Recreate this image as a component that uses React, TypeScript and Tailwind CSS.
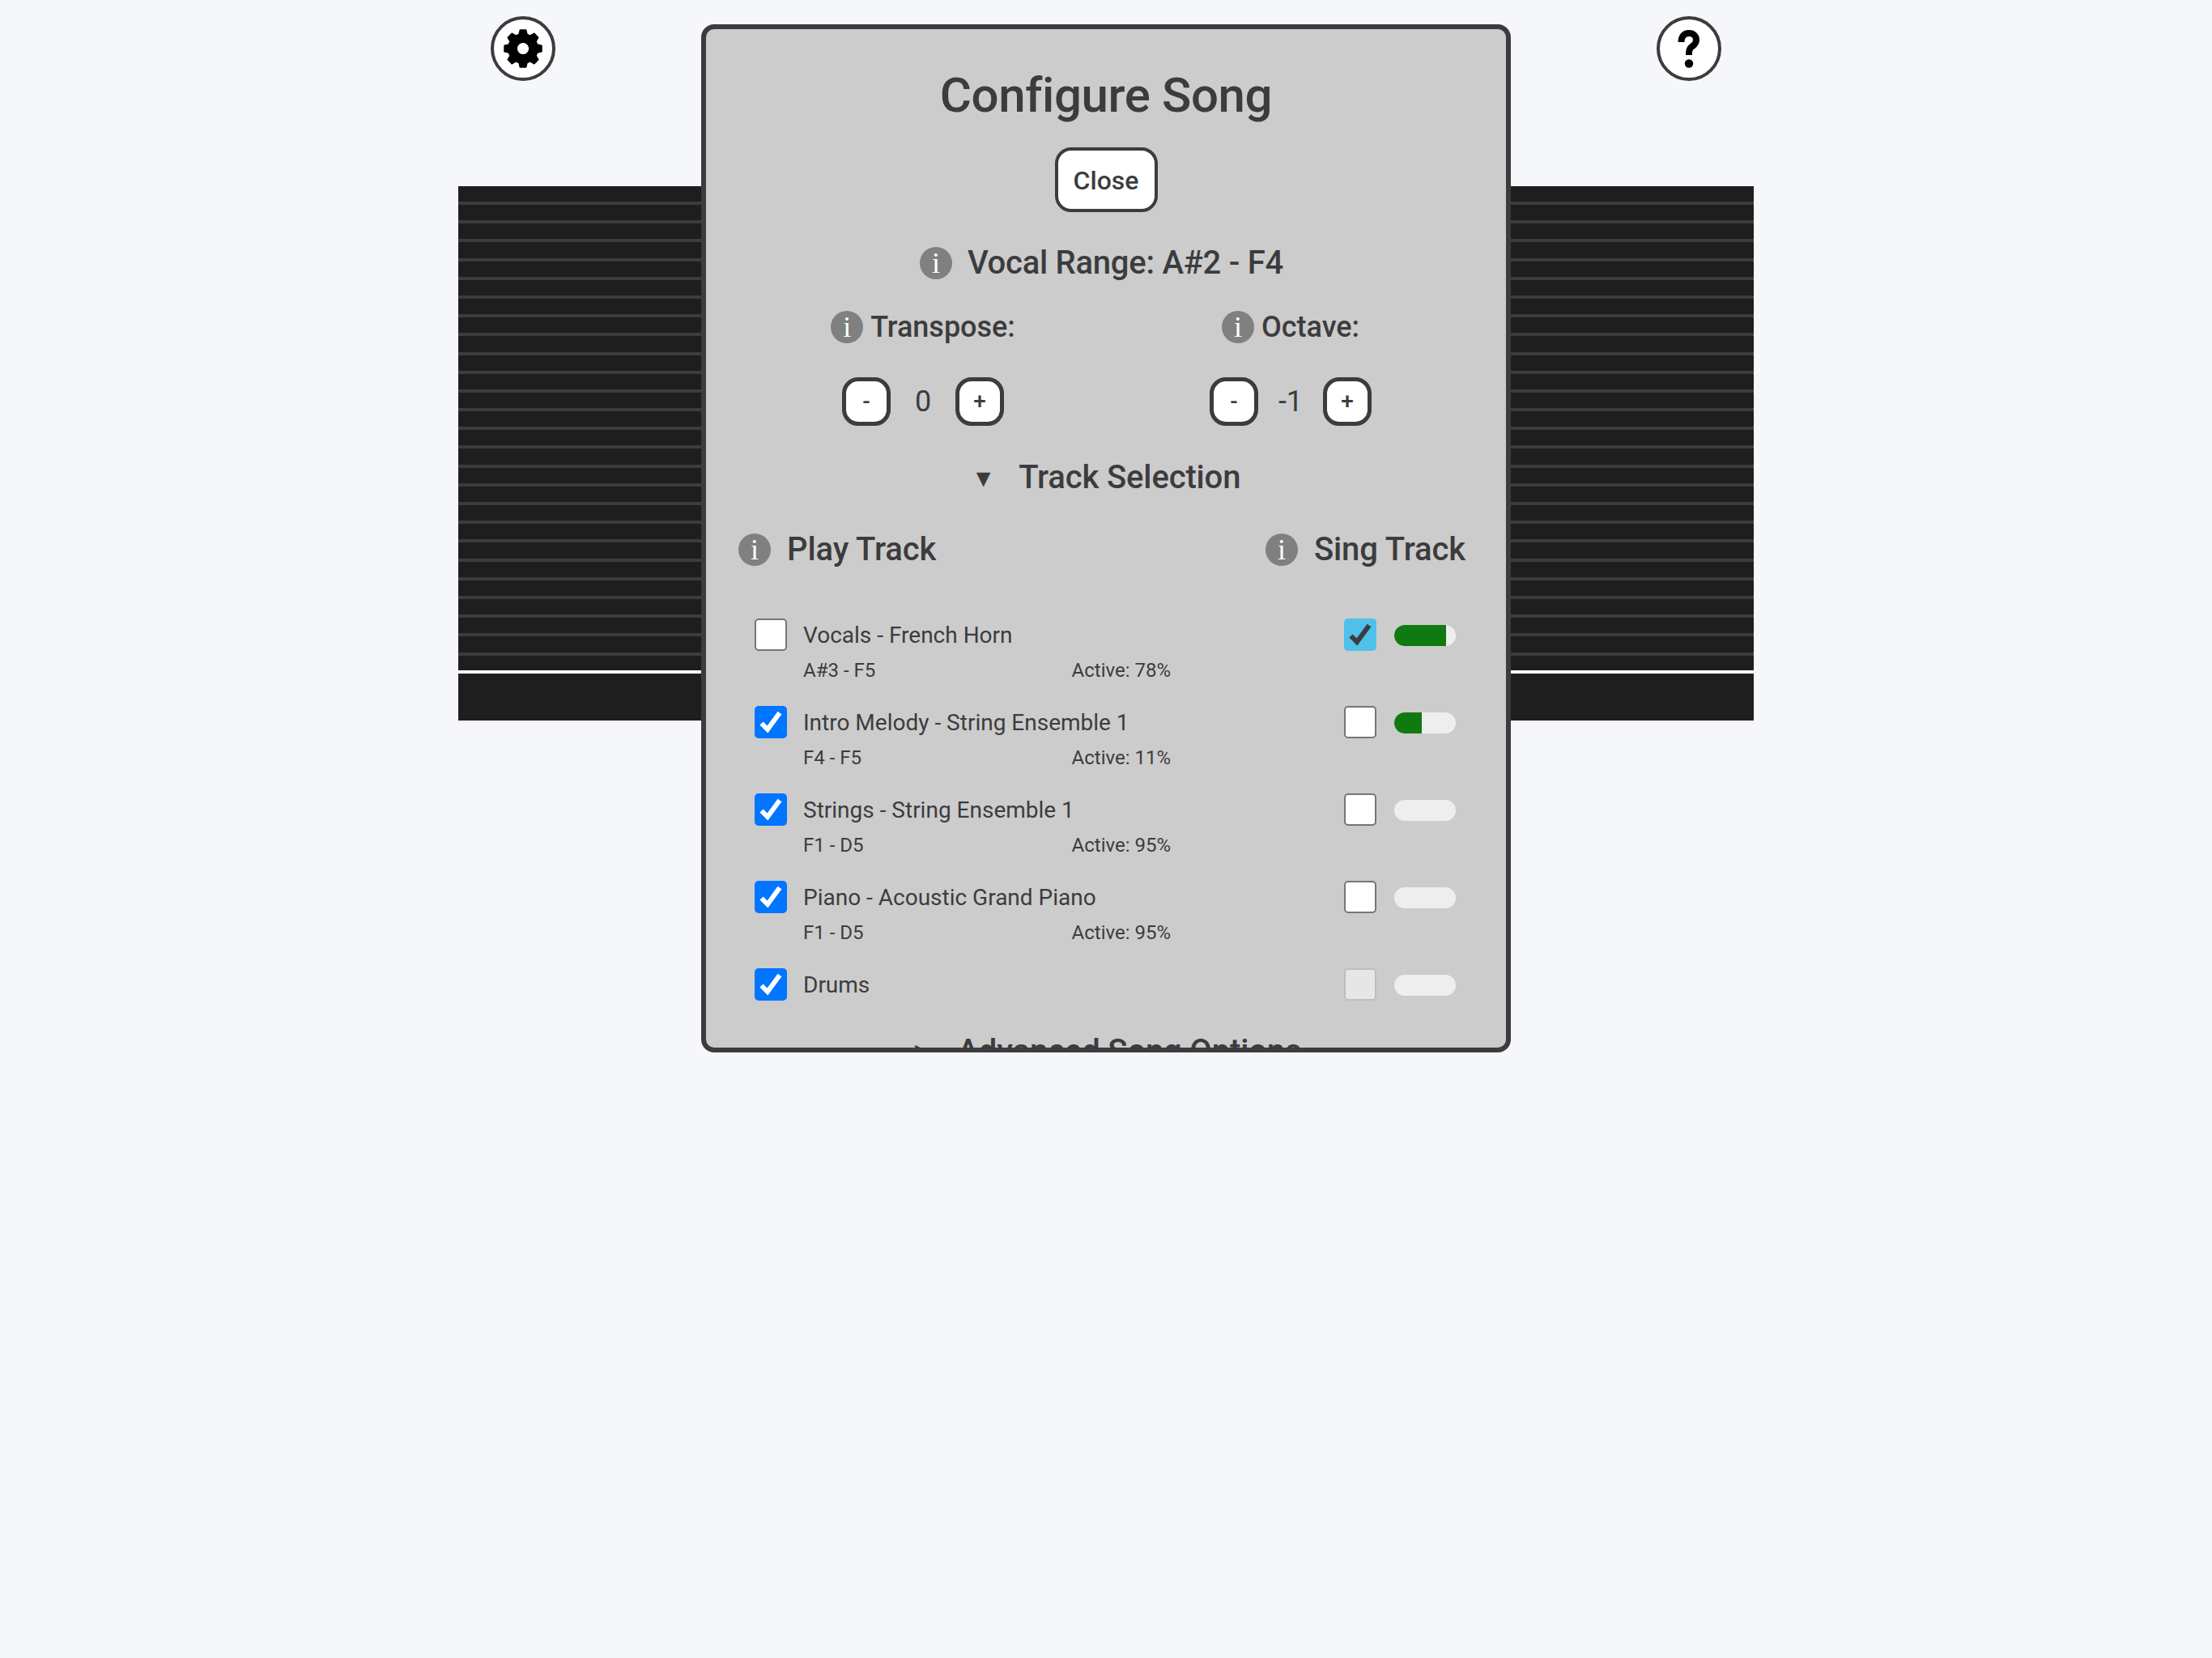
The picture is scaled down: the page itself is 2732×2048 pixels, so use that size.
const tracks = [
  { name: "Vocals - French Horn", range: "A#3 - F5", active: "78%", play: false, sing: "on", fill: "w-[64px]" },
  { name: "Intro Melody - String Ensemble 1", range: "F4 - F5", active: "11%", play: true, sing: "off", fill: "w-[34px]" },
  { name: "Strings - String Ensemble 1", range: "F1 - D5", active: "95%", play: true, sing: "off", fill: "w-0" },
  { name: "Piano - Acoustic Grand Piano", range: "F1 - D5", active: "95%", play: true, sing: "off", fill: "w-0" },
  { name: "Drums", range: "", active: "", play: true, sing: "disabled", fill: "w-0" },
];

// 8 tooth gear, one tooth pointing straight up
function gearPath() {
  const pts: string[] = [];
  for (let i = 0; i < 8; i++) {
    const a = (i * Math.PI) / 4 - Math.PI / 2;
    const steps: [number, number][] = [
      [18, -0.27],
      [23, -0.15],
      [23, 0.15],
      [18, 0.27],
    ];
    for (const [r, d] of steps) {
      pts.push(`${(24 + r * Math.cos(a + d)).toFixed(2)} ${(24 + r * Math.sin(a + d)).toFixed(2)}`);
    }
  }
  return `M${pts.join("L")}Z M24 16a8 8 0 1 0 0.01 0Z`;
}

function Info() {
  return (
    <span className="flex h-[40px] w-[40px] shrink-0 items-center justify-center rounded-full bg-[#808080] font-['Liberation_Serif',serif] text-[36px] font-normal leading-none text-white">
      i
    </span>
  );
}

function Check({ color }: { color: string }) {
  return (
    <svg viewBox="0 0 40 40" className="h-[40px] w-[40px]">
      <path d="M8.5 21.5L16 29L31 8.5" fill="none" stroke={color} strokeWidth="6" />
    </svg>
  );
}

function Stepper({ value }: { value: string }) {
  return (
    <div className="flex h-[60px] items-center">
      <button className="h-[60px] w-[60px] rounded-[20px] border-[5px] border-[#3c3c3e] bg-white text-[28px] font-medium text-[#3c3c3e]">-</button>
      <span className="w-[80px] text-center text-[36px] text-[#3c3c3e]">{value}</span>
      <button className="h-[60px] w-[60px] rounded-[20px] border-[5px] border-[#3c3c3e] bg-white text-[28px] font-medium text-[#3c3c3e]">+</button>
    </div>
  );
}

export default function App() {
  return (
    <div className="relative h-[2048px] overflow-hidden bg-[#f5f7fb] font-['Roboto',sans-serif] text-[#3c3c3e]">
      {/* staff behind the dialog */}
      <div className="mx-auto mt-[230px] flex h-[660px] w-[1600px] flex-col bg-[#1e1e1e] pt-[19px]">
        {Array.from({ length: 25 }).map((_, i) => (
          <div key={i} className="h-[23.2px] shrink-0">
            <div className="h-[4px] bg-[#3c3c3c]" />
          </div>
        ))}
        <div className="-mt-px h-[4px] shrink-0 bg-white" />
      </div>

      <button className="absolute left-[606px] top-[20px] flex h-[80px] w-[80px] items-center justify-center rounded-full border-[4px] border-[#3c3c3e] bg-white">
        <svg viewBox="0 0 48 48" className="h-[48px] w-[48px]">
          <path d={gearPath()} fill="#000" fillRule="evenodd" stroke="#000" strokeWidth="2" strokeLinejoin="round" />
        </svg>
      </button>
      <button className="absolute left-[2046px] top-[20px] flex h-[80px] w-[80px] items-center justify-center rounded-full border-[4px] border-[#3c3c3e] bg-white">
        <svg viewBox="26 26 48 48" className="h-[48px] w-[48px]">
          <path d="M40.5 42C40.5 35 44 31 50 31C55.5 31 59 34.5 59 39.5C59 45 54.5 46.5 52 49C50.5 50.5 50 52 50 58" fill="none" stroke="#000" strokeWidth="8" />
          <circle cx="50" cy="68.5" r="5.2" fill="#000" />
        </svg>
      </button>

      {/* dialog */}
      <div className="absolute left-[866px] top-[30px] flex h-[1270px] w-[1000px] flex-col overflow-hidden rounded-[16px] border-[6px] border-[#3c3c3e] bg-[#cccccc] pt-[52px]">
        <h1 className="h-[60px] shrink-0 text-center text-[60px] font-medium leading-[60px] tracking-[-0.4px]">Configure Song</h1>
        <button className="mx-auto mt-[34px] h-[80px] w-[127px] shrink-0 rounded-[20px] border-[4px] border-[#3c3c3e] bg-white pt-[2px] text-[32px] font-medium">Close</button>

        <div className="mt-[43px] flex h-[40px] shrink-0 items-center justify-center gap-[19px] pr-[11px] text-[40px] font-medium tracking-[-0.25px]">
          <Info />
          <span>Vocal Range: A#2 - F4</span>
        </div>

        <div className="mt-[39px] flex shrink-0 justify-center pl-[2px]">
          <div className="flex w-[454px] flex-col items-center">
            <div className="flex h-[40px] items-center gap-[9px] text-[36px] font-medium">
              <Info />
              <span>Transpose:</span>
            </div>
            <div className="mt-[42px]"><Stepper value="0" /></div>
          </div>
          <div className="flex w-[454px] flex-col items-center">
            <div className="flex h-[40px] items-center gap-[9px] text-[36px] font-medium">
              <Info />
              <span>Octave:</span>
            </div>
            <div className="mt-[42px]"><Stepper value="-1" /></div>
          </div>
        </div>

        <div className="mt-[42px] flex h-[44px] shrink-0 items-center justify-center gap-[29px] text-[40px] font-medium tracking-[-0.15px]">
          <span className="text-[30px]">▼</span>
          <span>Track Selection</span>
        </div>

        <div className="mt-[45px] flex h-[44px] shrink-0 items-center justify-between pl-[40px] pr-[50px] text-[40px] font-medium tracking-[-0.1px]">
          <div className="flex items-center gap-[20px]"><Info /><span>Play Track</span></div>
          <div className="flex items-center gap-[20px]"><Info /><span>Sing Track</span></div>
        </div>

        <div className="mt-[63px] flex shrink-0 flex-col pl-[60px] pr-[62px]">
          {tracks.map((t) => (
            <div key={t.name} className="flex h-[108px] items-start last:h-[40px]">
              {t.play ? (
                <div className="h-[40px] w-[40px] shrink-0 rounded-[5px] bg-[#0075ff]"><Check color="#fff" /></div>
              ) : (
                <div className="h-[40px] w-[40px] shrink-0 rounded-[5px] border-[2px] border-[#767676] bg-white" />
              )}
              <div className="ml-[20px] w-[454px]">
                <div className="h-[40px] text-[28px] leading-[42px]">{t.name}</div>
                {t.range && (
                  <div className="mt-[8px] flex justify-between text-[24px] leading-[32px]">
                    <span>{t.range}</span>
                    <span>Active: {t.active}</span>
                  </div>
                )}
              </div>
              <div className="ml-auto flex items-center">
                {t.sing === "on" && <div className="h-[40px] w-[40px] rounded-[5px] bg-[#4fc0ea]"><Check color="#3c3c3e" /></div>}
                {t.sing === "off" && <div className="h-[40px] w-[40px] rounded-[5px] border-[2px] border-[#767676] bg-white" />}
                {t.sing === "disabled" && <div className="h-[40px] w-[40px] rounded-[5px] border-[2px] border-[#bdbdbd] bg-[#e6e6e6]" />}
                <div className="ml-[22px] mt-[2px] h-[26px] w-[76px] overflow-hidden rounded-full bg-[#eeeeee]">
                  <div className={`h-full bg-[#0f7a0f] ${t.fill}`} />
                </div>
              </div>
            </div>
          ))}
        </div>

        <div className="mt-[41px] flex h-[44px] shrink-0 items-center justify-center gap-[30px] pl-[5px] text-[40px] font-medium tracking-[-0.15px]">
          <span className="text-[30px]">▶</span>
          <span>Advanced Song Options</span>
        </div>
      </div>
    </div>
  );
}
